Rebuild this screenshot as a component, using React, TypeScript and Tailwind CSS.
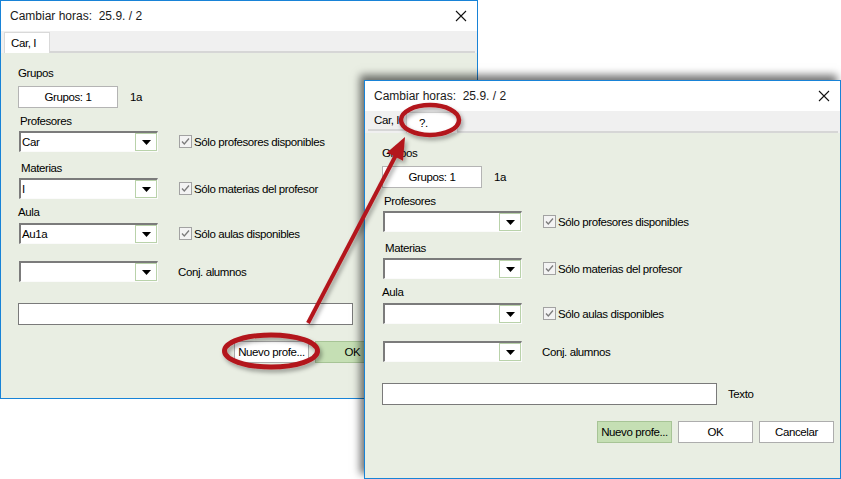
import React from "react";

const labelText = "text-[11.5px] leading-[14px] tracking-[-0.4px] text-black";

function Check() {
  return (
    <svg width="13" height="13" viewBox="0 0 13 13" className="shrink-0">
      <rect x="0.5" y="0.5" width="12" height="12" fill="#f3f3f3" stroke="#a2a2a2" />
      <polyline points="3,6.5 5.3,9 10,3.5" fill="none" stroke="#7c7c7c" strokeWidth="1.3" />
    </svg>
  );
}

function Combo({ value }: { value: string }) {
  return (
    <div className="ml-[1px] flex h-[21px] w-[139px] shrink-0 border-t-2 border-l-2 border-b border-r border-t-[#7b7b7b] border-l-[#7b7b7b] border-b-[#fbfbfb] border-r-[#fbfbfb] bg-white">
      <div className={`flex-1 pl-[1px] ${labelText} leading-[18px]`}>{value}</div>
      <div className="flex h-full w-[22px] items-center justify-center border border-[#b9d2aa] bg-white">
        <svg width="9" height="5" viewBox="0 0 9 5">
          <polygon points="0,0 9,0 4.5,5" fill="#000" />
        </svg>
      </div>
    </div>
  );
}

function CheckRow({ text }: { text: string }) {
  return (
    <div className="ml-[21px] flex items-center gap-[2px]">
      <Check />
      <span className={labelText}>{text}</span>
    </div>
  );
}

type Tab = { label: string; active: boolean };

function Btn({ label, green }: { label: string; green?: boolean }) {
  return (
    <div
      className={`flex h-[22px] w-[75px] items-center justify-center border ${green ? "border-[#a7c496] bg-[#c5dfb4]" : "border-[#adadad] bg-white"} ${labelText}`}
    >
      {label}
    </div>
  );
}

function Dialog({
  className,
  tabs,
  prof,
  mat,
  aula,
  greenOk,
}: {
  className: string;
  tabs: Tab[];
  prof: string;
  mat: string;
  aula: string;
  greenOk: boolean;
}) {
  return (
    <div className={`absolute flex h-[399px] flex-col border border-[#1883d7] bg-white ${className}`}>
      <div className="flex h-[30px] shrink-0 items-center justify-between pl-[9px] pr-[10px]">
        <span className="whitespace-pre text-[12px] text-[#1a1a1a]">Cambiar horas:  25.9. / 2</span>
        <svg width="12" height="12" viewBox="0 0 12 12">
          <path d="M1 1 L11 11 M11 1 L1 11" stroke="#111" strokeWidth="1.1" />
        </svg>
      </div>
      <div className="flex h-[22px] shrink-0 bg-[#f0f0f0] pl-[3px] pr-[2px]">
        {tabs.map((t) =>
          t.active ? (
            <div
              key={t.label}
              className={`flex h-[21px] items-center self-end border-x border-t border-[#d9d9d9] bg-white pl-[6px] pr-[8px] ${labelText} ${t.label === "?." ? "w-[52px] pl-[12px]" : "w-[46px]"}`}
            >
              {t.label}
            </div>
          ) : (
            <div key={t.label} className={`flex h-[20px] w-[38px] items-center pl-[6px] border-b-2 border-[#d6d6d6] ${labelText}`}>
              {t.label}
            </div>
          )
        )}
        <div className="flex-1 border-b-2 border-[#d6d6d6]" />
      </div>
      <div className="flex flex-1 flex-col bg-[#e9eee3] pl-[17px]">
        <div className={`mt-[13px] ${labelText}`}>Grupos</div>
        <div className="mt-[6px] flex items-center">
          <div className={`flex h-[22px] w-[100px] items-center justify-center border border-[#b4b4b4] bg-white ${labelText}`}>Grupos: 1</div>
          <span className={`ml-[12px] ${labelText}`}>1a</span>
        </div>
        <div className={`mt-[6px] pl-[2px] ${labelText}`}>Profesores</div>
        <div className="mt-[3px] flex items-center">
          <Combo value={prof} />
          <CheckRow text="Sólo profesores disponibles" />
        </div>
        <div className={`mt-[9px] pl-[3px] ${labelText}`}>Materias</div>
        <div className="mt-[3px] flex items-center">
          <Combo value={mat} />
          <CheckRow text="Sólo materias del profesor" />
        </div>
        <div className={`mt-[6px] ${labelText}`}>Aula</div>
        <div className="mt-[4px] flex items-center">
          <Combo value={aula} />
          <CheckRow text="Sólo aulas disponibles" />
        </div>
        <div className="mt-[17px] flex items-center">
          <Combo value="" />
          <span className={`ml-[20px] ${labelText}`}>Conj. alumnos</span>
        </div>
        <div className="mt-[21px] flex items-center">
          <div className="h-[22px] w-[335px] border border-[#7a7a7a] bg-white" />
          <span className={`ml-[11px] ${labelText}`}>Texto</span>
        </div>
        <div className="mt-[16px] flex justify-end gap-[6px] pr-[6px]">
          <Btn label="Nuevo profe..." green={!greenOk} />
          <Btn label="OK" green={greenOk} />
          <Btn label="Cancelar" />
        </div>
      </div>
    </div>
  );
}

export default function App() {
  return (
    <div className="relative h-[479px] w-[841px] overflow-hidden bg-white font-['Liberation_Sans',Arial,sans-serif]">
      <Dialog
        className="left-0 top-0 w-[478px]"
        tabs={[{ label: "Car, I", active: true }]}
        prof="Car"
        mat="I"
        aula="Au1a"
        greenOk={true}
      />
      <Dialog
        className="left-[364px] top-[80px] w-[477px] shadow-[-4px_-5px_8px_rgba(0,0,0,0.55)]"
        tabs={[
          { label: "Car, I", active: false },
          { label: "?.", active: true },
        ]}
        prof=""
        mat=""
        aula=""
        greenOk={false}
      />
      <svg className="pointer-events-none absolute inset-0" width="841" height="479" viewBox="0 0 841 479">
        <defs>
          <filter id="sh" x="-20%" y="-20%" width="140%" height="140%">
            <feDropShadow dx="2" dy="3" stdDeviation="2" floodColor="#000" floodOpacity="0.35" />
          </filter>
        </defs>
        <g filter="url(#sh)" fill="none" stroke="#b3141c">
          <ellipse cx="271" cy="351" rx="46.5" ry="16" strokeWidth="5" />
          <ellipse cx="430" cy="120" rx="29" ry="15" strokeWidth="4.5" />
          <line x1="308" y1="323" x2="396" y2="155" strokeWidth="4" />
          <polygon points="405,137 387,152.5 403,160.7" fill="#b3141c" stroke="none" />
        </g>
      </svg>
    </div>
  );
}
